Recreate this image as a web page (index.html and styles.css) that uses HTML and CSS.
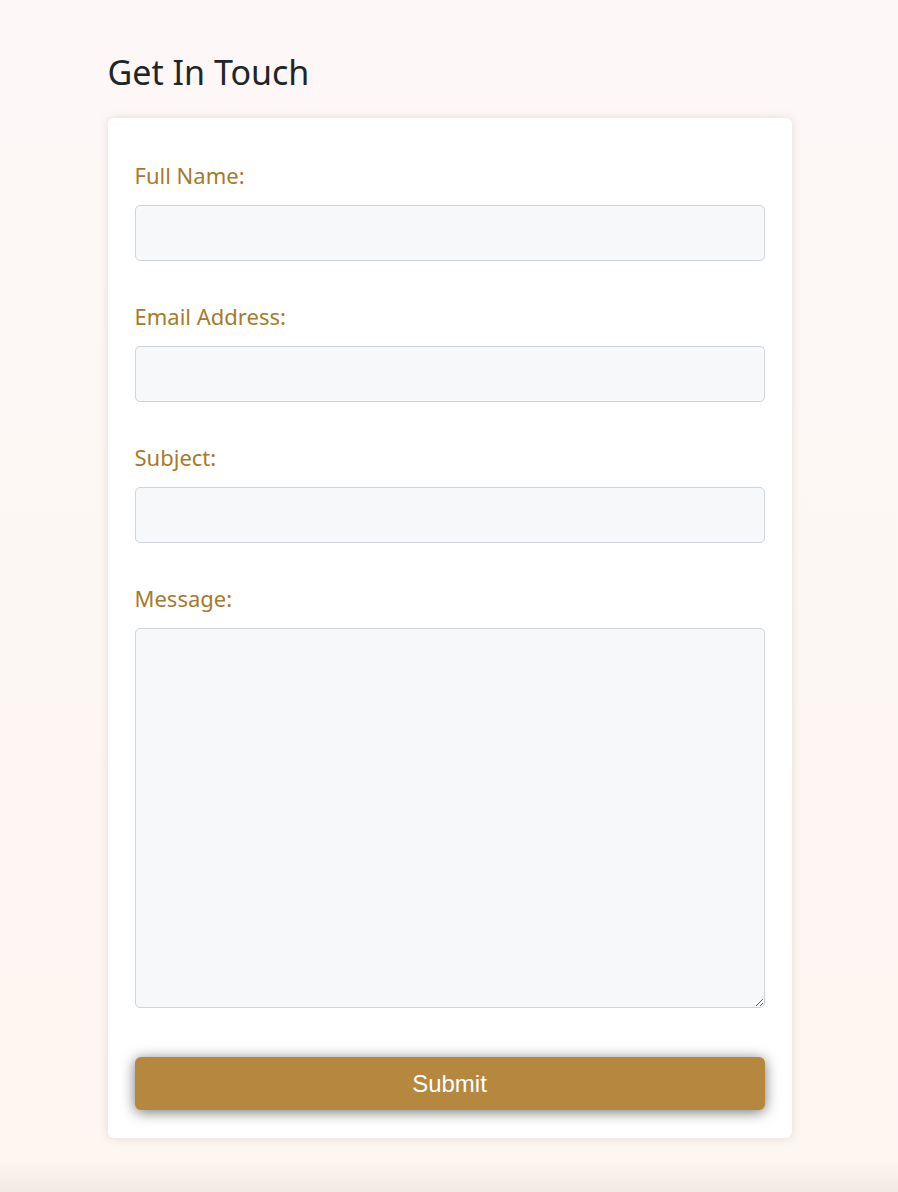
FILE: index.html
```html
<!DOCTYPE html>
<html lang="en">
<head>
<meta charset="utf-8">
<title>Get In Touch</title>
<link rel="stylesheet" href="styles.css">
</head>
<body>
<main class="wrap">
  <h1 class="title">Get In Touch</h1>
  <form class="card">
    <div class="field">
      <label class="label" for="name">Full Name:</label>
      <input class="input" id="name" type="text">
    </div>
    <div class="field">
      <label class="label" for="email">Email Address:</label>
      <input class="input" id="email" type="email">
    </div>
    <div class="field">
      <label class="label" for="subject">Subject:</label>
      <input class="input" id="subject" type="text">
    </div>
    <div class="field">
      <label class="label" for="message">Message:</label>
      <textarea class="input textarea" id="message"></textarea>
    </div>
    <button class="submit" type="button">Submit</button>
  </form>
</main>
</body>
</html>
```
FILE: styles.css
```css
html {
  height: 100%;
  background: linear-gradient(to bottom, #fdf8f8 0px, #fdf7f3 700px, #fdf6f1 1160px, #f2e9e2 1192px);
}
body {
  margin: 0;
  min-height: 100%;
  font-family: "Noto Sans", "Open Sans", sans-serif;
}
.wrap {
  width: 684px;
  margin: 0 auto;
  padding-top: 48px;
  padding-left: 1px;
}
.title {
  margin: 0 0 22px;
  font-size: 34px;
  line-height: 48px;
  font-weight: 400;
  color: #212529;
}
.card {
  display: flex;
  flex-direction: column;
  background: #fff;
  border-radius: 6px;
  box-shadow: 0 0 10px rgba(120, 90, 90, 0.18);
  padding: 43px 27px 28px;
}
.field {
  display: flex;
  flex-direction: column;
  margin-bottom: 41px;
}
.label {
  font-size: 22px;
  line-height: 28px;
  color: #a67a2c;
  margin-bottom: 16px;
}
.input {
  box-sizing: border-box;
  height: 56px;
  width: 100%;
  margin: 0;
  border: 1.5px solid #cfd4da;
  border-radius: 5px;
  background: #f7f8fa;
  font: inherit;
}
.textarea {
  height: 380px;
  resize: vertical;
}
.field:last-of-type {
  margin-bottom: 49px;
}
.submit {
  height: 53px;
  border: none;
  border-radius: 6px;
  background: #b5873f;
  color: #fff;
  font-family: "Liberation Sans", Arial, sans-serif;
  font-size: 24px;
  box-shadow: 0 2px 14px rgba(0, 0, 0, 0.55);
}
```
